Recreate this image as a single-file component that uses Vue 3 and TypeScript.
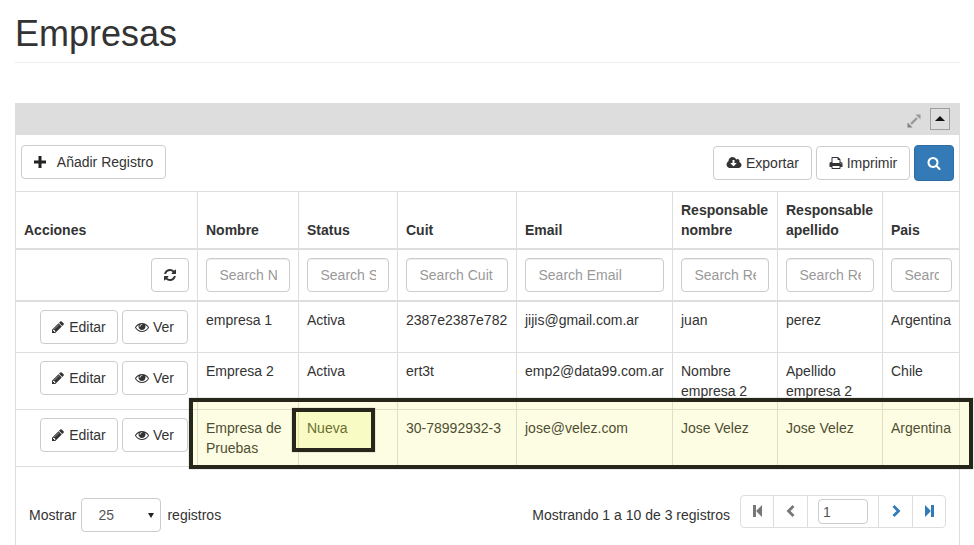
<template>
  <div class="page">
    <h1 class="title">Empresas</h1>
    <div class="panel">
      <div class="panel-head">
        <svg class="expand" viewBox="0 0 14 14">
          <line x1="4" y1="10" x2="10" y2="4" />
          <path class="tip" d="M8.500 0.500h5v5z" />
          <path class="tip dark" d="M0.500 8.500v5h5z" />
        </svg>
        <button class="collapse"><span class="tri"></span></button>
      </div>
      <div class="toolbar">
        <button class="btn add">
          <svg class="plus" viewBox="0 0 12 12"><path d="M4.500 0h3v4.500H12v3H7.500V12h-3V7.500H0v-3h4.500z" /></svg>
          Añadir Registro
        </button>
        <div class="tools">
          <button class="btn export">
            <svg class="ico cloud" viewBox="0 0 1920 1792"><path :d="icons.cloud" /></svg>
            Exportar
          </button>
          <button class="btn print">
            <svg class="ico" viewBox="64 0 1664 1792"><path :d="icons.print" /></svg>
            Imprimir
          </button>
          <button class="btn primary">
            <svg class="ico" viewBox="0 0 1792 1792"><path :d="icons.search" /></svg>
          </button>
        </div>
      </div>
      <table class="grid">
        <colgroup>
          <col v-for="w in widths" :key="w.k" :style="{ width: w.v + 'px' }" />
        </colgroup>
        <thead>
          <tr>
            <th>Acciones</th>
            <th>Nombre</th>
            <th>Status</th>
            <th>Cuit</th>
            <th>Email</th>
            <th>Responsable nombre</th>
            <th>Responsable apellido</th>
            <th>Pais</th>
          </tr>
          <tr class="filters">
            <td class="act">
              <button class="btn reload">
                <svg class="ico" viewBox="0 0 1792 1792"><path :d="icons.refresh" /></svg>
              </button>
            </td>
            <td v-for="p in placeholders" :key="p">
              <input class="field" type="text" :placeholder="p" />
            </td>
          </tr>
        </thead>
        <tbody>
          <tr v-for="r in rows" :key="r.cuit">
            <td class="act">
              <button class="btn edit">
                <svg class="ico" viewBox="0 0 1792 1792"><path :d="icons.pencil" /></svg>
                Editar
              </button>
              <button class="btn view">
                <svg class="ico eye" viewBox="0 0 1792 1792"><path :d="icons.eye" /></svg>
                Ver
              </button>
            </td>
            <td>{{ r.nombre }}</td>
            <td>{{ r.status }}</td>
            <td>{{ r.cuit }}</td>
            <td>{{ r.email }}</td>
            <td>{{ r.respNombre }}</td>
            <td>{{ r.respApellido }}</td>
            <td>{{ r.pais }}</td>
          </tr>
        </tbody>
      </table>
      <div class="footer">
        <div class="length">
          <span class="lbl">Mostrar</span>
          <div class="select">25<span class="caret"></span></div>
          <span>registros</span>
        </div>
        <div class="paging">
          <span class="info">Mostrando 1 a 10 de 3 registros</span>
          <div class="pager">
            <span class="cell first">
              <svg class="pg" viewBox="0 0 9 12"><path d="M0 0h3v12H0zM9 0v12L3.500 6.500v-1z" /></svg>
            </span>
            <span class="cell prev">
              <svg class="chev" viewBox="0 0 9 12"><polyline points="7.500,1 2.500,6 7.500,11" /></svg>
            </span>
            <span class="cell mid"><span class="page-input">1</span></span>
            <span class="cell next">
              <svg class="chev on" viewBox="0 0 9 12"><polyline points="1.500,1 6.500,6 1.500,11" /></svg>
            </span>
            <span class="cell last">
              <svg class="pg on" viewBox="0 0 9 12"><path d="M9 0H6v12h3zM0 0v12l5.500-5.500v-1z" /></svg>
            </span>
          </div>
        </div>
      </div>
    </div>
    <!-- recuadros de resaltado sobre la captura -->
    <div class="mark mark-row"></div>
    <div class="mark mark-cell"></div>
  </div>
</template>

<script setup lang="ts">
const icons = {
  cloud: 'M1280 928q0-14-9-23t-23-9h-224v-352q0-13-9.5-22.5t-22.5-9.5h-192q-13 0-22.5 9.5t-9.5 22.5v352h-224q-13 0-22.5 9.5t-9.5 22.5q0 14 9 23l352 352q9 9 23 9t23-9l351-351q10-12 10-24zm640 224q0 159-112.5 271.5t-271.5 112.5h-1088q-185 0-316.5-131.5t-131.5-316.5q0-130 70-240t188-165q-2-30-2-43 0-212 150-362t362-150q156 0 285.5 87t188.5 231q71-62 166-62 106 0 181 75t75 181q0 76-41 138 130 31 213.5 135.5t83.5 238.5z',
  print: 'M448 1536h896v-256h-896v256zm0-640h896v-384h-160q-40 0-68-28t-28-68v-160h-640v640zm1152 64q0-26-19-45t-45-19-45 19-19 45 19 45 45 19 45-19 19-45zm128 0v416q0 13-9.5 22.5t-22.5 9.5h-224v160q0 40-28 68t-68 28h-960q-40 0-68-28t-28-68v-160h-224q-13 0-22.5-9.5t-9.5-22.5v-416q0-79 56.5-135.5t135.5-56.5h64v-544q0-40 28-68t68-28h672q40 0 88 20t76 48l152 152q28 28 48 76t20 88v256h64q79 0 135.5 56.5t56.5 135.5z',
  search: 'M1216 832q0-185-131.5-316.5t-316.5-131.5-316.5 131.5-131.5 316.5 131.5 316.5 316.5 131.5 316.5-131.5 131.5-316.5zm512 832q0 52-38 90t-90 38q-54 0-90-38l-343-342q-179 124-399 124-143 0-273.5-55.5t-225-150-150-225-55.5-273.5 55.5-273.5 150-225 225-150 273.5-55.5 273.5 55.5 225 150 150 225 55.5 273.5q0 220-124 399l343 343q37 37 37 90z',
  refresh: 'M1639 1056q0 5-1 7-64 268-268 434.5t-478 166.5q-146 0-282.5-55t-243.5-157l-129 129q-19 19-45 19t-45-19-19-45v-448q0-26 19-45t45-19h448q26 0 45 19t19 45-19 45l-137 137q71 66 161 102t187 36q134 0 250-65t186-179q11-17 53-117 8-23 30-23h192q13 0 22.5 9.5t9.5 22.5zm25-800v448q0 26-19 45t-45 19h-448q-26 0-45-19t-19-45 19-45l138-138q-148-137-349-137-134 0-250 65t-186 179q-11 17-53 117-8 23-30 23h-199q-13 0-22.5-9.5t-9.5-22.5v-7q65-268 270-434.5t480-166.5q146 0 284 55.5t245 156.5l130-129q19-19 45-19t45 19 19 45z',
  pencil: 'M491 1536l91-91-235-235-91 91v107h128v128h107zm523-928q0-22-22-22-10 0-17 7l-542 542q-7 7-7 17 0 22 22 22 10 0 17-7l542-542q7-7 7-17zm-54-192l416 416-832 832h-416v-416zm683 96q0 53-37 90l-166 166-416-416 166-165q36-38 90-38 53 0 91 38l235 234q37 39 37 91z',
  eye: 'M1664 960q-152-236-381-353 61 104 61 225 0 185-131.5 316.5t-316.5 131.5-316.5-131.5-131.5-316.5q0-121 61-225-229 117-381 353 133 205 333.5 326.5t434.5 121.5 434.5-121.5 333.5-326.5zm-720-384q0-20-14-34t-34-14q-125 0-214.5 89.5t-89.5 214.5q0 20 14 34t34 14 34-14 14-34q0-86 61-147t147-61q20 0 34-14t14-34zm848 384q0 34-20 69-140 230-376.5 368.5t-499.5 138.5-499.5-139-376.5-368q-20-35-20-69t20-69q140-229 376.5-368t499.5-139 499.5 139 376.5 368q20 35 20 69z'
}

const widths = [
  { k: 'acciones', v: 181 },
  { k: 'nombre', v: 101 },
  { k: 'status', v: 99 },
  { k: 'cuit', v: 119 },
  { k: 'email', v: 156 },
  { k: 'rn', v: 105 },
  { k: 'ra', v: 105 },
  { k: 'pais', v: 78 }
]

const placeholders = [
  'Search Nombre',
  'Search Status',
  'Search Cuit',
  'Search Email',
  'Search Responsable nombre',
  'Search Responsable apellido',
  'Search Pais'
]

const rows = [
  { nombre: 'empresa 1', status: 'Activa', cuit: '2387e2387e782', email: 'jijis@gmail.com.ar', respNombre: 'juan', respApellido: 'perez', pais: 'Argentina' },
  { nombre: 'Empresa 2', status: 'Activa', cuit: 'ert3t', email: 'emp2@data99.com.ar', respNombre: 'Nombre empresa 2', respApellido: 'Apellido empresa 2', pais: 'Chile' },
  { nombre: 'Empresa de Pruebas', status: 'Nueva', cuit: '30-78992932-3', email: 'jose@velez.com', respNombre: 'Jose Velez', respApellido: 'Jose Velez', pais: 'Argentina' }
]
</script>

<style scoped>
.page {
  position: relative;
  height: 545px;
  padding: 0 14px 0 15px;
  box-sizing: border-box;
  overflow: hidden;
  font-family: "Liberation Sans", Arial, sans-serif;
  font-size: 14px;
  line-height: 20px;
  color: #333;
}

.title {
  margin: 14px 0 0;
  padding-bottom: 8px;
  border-bottom: 1px solid #eee;
  font-size: 36px;
  font-weight: 500;
  line-height: 39.6px;
}

.panel {
  margin-top: 40px;
  padding-bottom: 30px;
  border-left: 1px solid #ddd;
  border-right: 1px solid #ddd;
}

.panel-head {
  display: flex;
  align-items: center;
  justify-content: flex-end;
  gap: 9px;
  height: 32px;
  margin: 0 -1px;
  padding-right: 10px;
  background: #ddd;
}

.expand {
  width: 14px;
  height: 14px;
  margin-top: 4px;
}

.expand line {
  stroke: #999;
  stroke-width: 2.4;
}

.tip {
  fill: #999;
}

.tip.dark {
  fill: #808080;
}

.collapse {
  display: flex;
  align-items: center;
  justify-content: center;
  width: 20px;
  height: 22px;
  padding: 0;
  border: 1px solid #a0a0a0;
  background: transparent;
}

.tri {
  width: 0;
  height: 0;
  border-left: 5px solid transparent;
  border-right: 5px solid transparent;
  border-bottom: 5px solid #111;
}

.toolbar {
  display: flex;
  align-items: center;
  justify-content: space-between;
  height: 56px;
  padding: 0 5px;
}

.tools {
  display: flex;
  align-items: center;
  gap: 4px;
}

.btn {
  height: 34px;
  padding: 6px 12px;
  border: 1px solid #ccc;
  border-radius: 4px;
  background: #fff;
  color: #333;
  font: inherit;
  white-space: nowrap;
}

.ico {
  width: 14px;
  height: 14px;
  fill: currentColor;
  vertical-align: -2px;
}

.add {
  width: 145px;
  margin-top: -2px;
  padding: 6px 0;
}

.plus {
  width: 12px;
  height: 12px;
  margin-right: 8px;
  fill: #222;
  vertical-align: -1px;
}

.export {
  width: 99px;
  padding: 6px 0;
}

.cloud {
  width: 16px;
}

.print {
  width: 94px;
  padding: 6px 0;
}

.primary {
  width: 40px;
  height: 36px;
  padding: 0;
  border-color: #2e6da4;
  background: #337ab7;
  color: #fff;
}

.grid {
  width: 944px;
  table-layout: fixed;
  border-collapse: collapse;
}

.grid th,
.grid td {
  padding: 8px 8px 8px 8.500px;
  border: 1px solid #ddd;
  text-align: left;
  vertical-align: top;
}

.grid th {
  border-bottom-width: 2px;
  font-weight: 700;
  vertical-align: bottom;
}

.grid th:first-child,
.grid td:first-child {
  padding-left: 8px;
  border-left: 0;
}

.grid th:last-child,
.grid td:last-child {
  border-right: 0;
}

.grid .filters td {
  padding: 8px;
  border-bottom-width: 2px;
}

.grid .act {
  text-align: right;
}

.edit {
  width: 78px;
  padding: 6px 0;
}

.view {
  width: 66px;
  margin: 0 1px 0 4px;
  padding: 6px 0;
}

.reload {
  width: 38px;
  padding: 0;
}

.field {
  display: block;
  width: 100%;
  height: 34px;
  padding: 6px 12px 6px 13px;
  box-sizing: border-box;
  border: 1px solid #ccc;
  border-radius: 4px;
  background: #fff;
  font: inherit;
  box-shadow: inset 0 1px 1px rgba(0, 0, 0, 0.075);
}

.field::placeholder {
  color: #999;
}

.footer {
  display: flex;
  align-items: flex-start;
  justify-content: space-between;
  margin-top: 31px;
  padding: 0 13px;
}

.length {
  display: flex;
  align-items: center;
  gap: 6px;
}

.lbl {
  margin-right: -1px;
}

.select {
  position: relative;
  width: 80px;
  height: 34px;
  padding: 6px 16px;
  box-sizing: border-box;
  border: 1px solid #ccc;
  border-radius: 4px;
  color: #555;
}

.caret {
  position: absolute;
  top: 14px;
  right: 6px;
  border-left: 3px solid transparent;
  border-right: 3px solid transparent;
  border-top: 5px solid #222;
}

.paging {
  display: flex;
  align-items: flex-start;
  gap: 10px;
}

.info {
  margin-top: 7px;
}

.pager {
  display: flex;
  height: 33px;
  margin-top: -3px;
  box-sizing: border-box;
  border: 1px solid #ddd;
  border-radius: 4px;
}

.cell {
  display: flex;
  align-items: center;
  justify-content: center;
  box-sizing: border-box;
  border-right: 1px solid #ddd;
}

.cell.first { width: 33px; }
.cell.prev { width: 34px; }
.cell.mid { width: 71px; }
.cell.next { width: 34px; padding-left: 1px; }
.cell.last { width: 32px; padding-left: 1px; border-right: 0; }

.pg {
  width: 9px;
  height: 12px;
  fill: #777;
}

.pg.on {
  fill: #337ab7;
}

.chev {
  width: 9px;
  height: 12px;
  fill: none;
  stroke: #777;
  stroke-width: 2.800;
}

.chev.on {
  stroke: #337ab7;
}

.page-input {
  width: 50px;
  height: 25px;
  padding-left: 4px;
  box-sizing: border-box;
  border: 1px solid #ccc;
  border-radius: 4px;
  line-height: 25px;
  color: #555;
}

.mark {
  position: absolute;
  box-sizing: border-box;
  border: 4px solid #26261b;
  box-shadow: 0 0 1px rgba(60, 60, 40, 0.6);
}

.mark-row {
  left: 189px;
  top: 398px;
  width: 784px;
  height: 71px;
  background: rgba(240, 240, 60, 0.14);
}

.mark-cell {
  left: 292px;
  top: 408px;
  width: 83px;
  height: 44px;
  background: rgba(225, 250, 55, 0.18);
}
</style>

<style>
html,
body {
  margin: 0;
  overflow: hidden;
  background: #fff;
}
</style>
